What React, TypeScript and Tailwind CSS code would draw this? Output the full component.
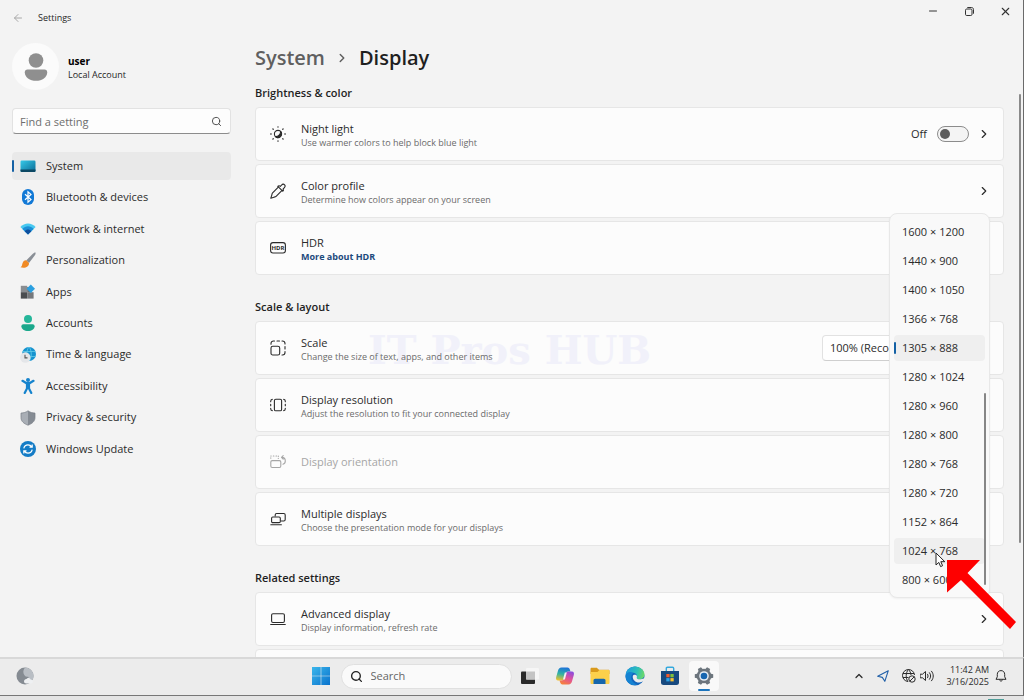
import { useState, type ReactNode } from 'react';
import { ArrowLeft, ChevronRight, ChevronUp, Minus, Search, X } from 'lucide-react';

const navItems = [
  { label: 'System', icon: <SystemIcon /> },
  { label: 'Bluetooth & devices', icon: <BluetoothIcon /> },
  { label: 'Network & internet', icon: <NetworkIcon /> },
  { label: 'Personalization', icon: <BrushIcon /> },
  { label: 'Apps', icon: <AppsIcon /> },
  { label: 'Accounts', icon: <AccountsIcon /> },
  { label: 'Time & language', icon: <TimeIcon /> },
  { label: 'Accessibility', icon: <AccessibilityIcon /> },
  { label: 'Privacy & security', icon: <ShieldIcon /> },
  { label: 'Windows Update', icon: <UpdateIcon /> },
];

const resolutions = [
  '1600 × 1200',
  '1440 × 900',
  '1400 × 1050',
  '1366 × 768',
  '1305 × 888',
  '1280 × 1024',
  '1280 × 960',
  '1280 × 800',
  '1280 × 768',
  '1280 × 720',
  '1152 × 864',
  '1024 × 768',
  '800 × 600',
];

/* ---------- sidebar icons ---------- */

function SystemIcon() {
  return (
    <svg className="w-4 h-4" viewBox="0 0 16 16">
      <defs>
        <linearGradient id="sys" x1="0" y1="0" x2="1" y2="1">
          <stop offset="0" stopColor="#35c9e8" />
          <stop offset="1" stopColor="#0a6a94" />
        </linearGradient>
      </defs>
      <rect x="0.5" y="2.5" width="15" height="11.5" rx="1.2" fill="url(#sys)" />
      <path d="M0.5 11.6h15v1.2a1.2 1.2 0 0 1-1.2 1.2H1.7a1.2 1.2 0 0 1-1.2-1.2z" fill="#0b4763" />
    </svg>
  );
}

function BluetoothIcon() {
  return (
    <svg className="w-4 h-4" viewBox="0 0 16 16">
      <rect x="2" y="0" width="12" height="16" rx="6" fill="#1279d6" />
      <path d="M5 5.2l6 5.4-3 2.6V2.8l3 2.6-6 5.4" fill="none" stroke="#fff" strokeWidth="1.2" />
    </svg>
  );
}

function NetworkIcon() {
  return (
    <svg className="w-4 h-4" viewBox="0 0 16 16">
      <path d="M0.4 6C4.4 1.2 11.6 1.2 15.6 6L8 13.5z" fill="#47c8f0" />
      <path d="M2.4 8C5.4 4.400 10.6 4.400 13.6 8L8 13.5z" fill="#1b8fd8" />
      <path d="M4.6 10.200c2-2.3 4.800-2.3 6.800 0L8 13.500z" fill="#0e4f9e" />
    </svg>
  );
}

function BrushIcon() {
  return (
    <svg className="w-4 h-4" viewBox="0 0 16 16">
      <path d="M15.5 0.5c.4.9-.2 2-.8 3L9 11 6.2 8.4 12.6 2c.9-.9 1.9-1.6 2.9-1.5z" fill="#8a8f96" />
      <path d="M6.2 8.3L9 11c.3 2-1.2 3.8-3.4 4.4-1.7.4-3.6.3-5.1-.2 1.6-.8 1.4-2.1 2-4C3.200 9.200 4.600 8 6.200 8.300z" fill="#f08a24" />
    </svg>
  );
}

function AppsIcon() {
  return (
    <svg className="w-4 h-4" viewBox="0 0 16 16">
      <rect x="0.8" y="1.8" width="6.4" height="6.4" fill="#8a8d91" />
      <rect x="0.8" y="8.2" width="6.4" height="6.4" fill="#4b4d50" />
      <rect x="7.2" y="8.2" width="6.4" height="6.4" fill="#75787c" />
      <rect x="7.2" y="3" width="3" height="5.2" fill="#6b6e72" />
      <path d="M10.8 0.5L15 4.7 10.8 8.9 6.6 4.7z" fill="#2a9fe0" />
    </svg>
  );
}

function AccountsIcon() {
  return (
    <svg className="w-4 h-4" viewBox="0 0 16 16">
      <circle cx="8" cy="4" r="4" fill="#25b69a" />
      <path d="M3.4 9.2h9.2c1.2 0 2 .8 2 2 0 3-3 4.8-6.6 4.8S1.4 14.2 1.4 11.2c0-1.2.8-2 2-2z" fill="#1ba88c" />
    </svg>
  );
}

function TimeIcon() {
  return (
    <svg className="w-4 h-4" viewBox="0 0 16 16">
      <circle cx="9" cy="7" r="7" fill="#1693cf" />
      <path d="M9 0c-3 3-3 11 0 14M9 0c3 3 3 11 0 14M2.5 4.5h13M2.5 9.5h13" fill="none" stroke="#63cbe9" strokeWidth="0.8" />
      <circle cx="5.3" cy="10.5" r="5.2" fill="#e4e6e9" />
      <path d="M5 7.7v3.2h2.5" fill="none" stroke="#555" strokeWidth="1.1" />
    </svg>
  );
}

function AccessibilityIcon() {
  return (
    <svg className="w-4 h-4" viewBox="0 0 16 16">
      <circle cx="8" cy="2" r="2" fill="#1583cd" />
      <path d="M2.5 2.8L6.5 5.2h3l4-2.4M8 5v5M7 6v4.500L4.700 15M9 6v4.500l2.300 4.500" fill="none" stroke="#1583cd" strokeWidth="2.2" strokeLinecap="round" strokeLinejoin="round" />
    </svg>
  );
}

function ShieldIcon() {
  return (
    <svg className="w-4 h-4" viewBox="0 0 16 16">
      <path d="M8 .8c2 1.5 4.400 2.200 7 2.300v4.500c0 3.700-2.800 6-7 7.600z" fill="#858b93" />
      <path d="M8 .8C6 2.300 3.600 3 1 3.100v4.500c0 3.700 2.800 6 7 7.600z" fill="#a9aeb5" />
      <path d="M8 .8c2 1.5 4.400 2.200 7 2.300v4.500c0 3.700-2.800 6-7 7.600-4.200-1.600-7-3.900-7-7.600V3.100C3.600 3 6 2.300 8 .8z" fill="none" stroke="#777d85" strokeWidth="0.7" />
    </svg>
  );
}

function UpdateIcon() {
  return (
    <svg className="w-4 h-4" viewBox="0 0 16 16">
      <circle cx="8" cy="8" r="8" fill="#147cc6" />
      <path d="M3.8 7.3C4.3 5 6 3.900 8 3.900c1.600 0 2.900.7 3.800 2M12.200 3.500v2.700H9.500M12.200 8.700c-.5 2.300-2.200 3.400-4.200 3.400-1.600 0-2.900-.7-3.800-2M3.800 12.500V9.800h2.700" fill="none" stroke="#fff" strokeWidth="1.2" />
    </svg>
  );
}

/* ---------- card icons ---------- */

function LineIcon({ children }: { children: ReactNode }) {
  return (
    <svg className="w-4 h-4 shrink-0" viewBox="0 0 16 16" fill="none" stroke="currentColor" strokeWidth="1.1" strokeLinecap="round" strokeLinejoin="round">
      {children}
    </svg>
  );
}

const nightLightIcon = (
  <LineIcon>
    <circle cx="8" cy="8" r="3.6" />
    <path d="M10.6 5.4a3.7 3.7 0 0 1-5.2 5.2c2.8.2 5.4-2.4 5.2-5.2z" fill="currentColor" />
    <path d="M8 .8v.3M8 14.900v.3M.8 8h.3M14.900 8h.3M2.900 2.900l.3.3M12.800 12.800l.3.3M2.900 13.100l.3-.3M12.800 3.200l.3-.3" strokeWidth="1.3" />
  </LineIcon>
);

const colorProfileIcon = (
  <LineIcon>
    <path d="M8.300 4.200L2.600 9.900c-.5.500-.6 1.200-.8 2.200L.8 15.200l3.100-1c1-.2 1.700-.3 2.200-.8l5.700-5.700" />
    <path d="M7.800 3.300l4.900 4.900c1-.6.900-1.500.3-2.100l1.200-1.200c1.200-1.200 1.200-2.200.4-3.100-.9-.9-2-.9-3.100.3L10.300 3.300c-.7-.7-1.800-.8-2.500 0z" />
  </LineIcon>
);

const hdrIcon = (
  <svg className="w-4 h-4 shrink-0" viewBox="0 0 16 16" fill="none" stroke="currentColor">
    <rect x="0.6" y="2.6" width="14.8" height="10.4" rx="2.4" strokeWidth="1.1" />
    <text x="8" y="10.1" textAnchor="middle" fill="currentColor" stroke="none" fontSize="6" fontWeight="700">HDR</text>
  </svg>
);

const scaleIcon = (
  <LineIcon>
    <rect x="1" y="6.3" width="8.7" height="8.7" rx="1.8" />
    <path d="M1 4.200V3.500A2.500 2.500 0 0 1 3.500 1h1M7 1h2.500M12 1h.5A2.500 2.500 0 0 1 15 3.500V4M15 6.500V9M15 11.500v1a2.500 2.500 0 0 1-2.500 2.500H12" />
  </LineIcon>
);

const resolutionIcon = (
  <LineIcon>
    <rect x="4.400" y="2.200" width="7.200" height="11.600" rx="1.4" />
    <path d="M2.300 2.400C1.300 2.500.7 3.200.7 4.200v.6M.7 7.200v1.600M2.300 13.600c-1-.1-1.600-.8-1.600-1.800v-.6M13.700 2.400c1 .1 1.600.8 1.600 1.800v.6M15.300 7.200v1.600M13.700 13.600c1-.1 1.600-.8 1.600-1.800v-.6" />
  </LineIcon>
);

const orientationIcon = (
  <LineIcon>
    <rect x="0.8" y="6.6" width="10" height="6.900" rx="1.4" />
    <path d="M.8 4.300v-.4M.8 2h.4M3.300 2h.6M6 2h.6M8.300 2v.4M8.300 4.200v.2M13.200 1.700l-1.700 1.700 1.700 1.700M11.700 3.400c2.400 0 3.600 1.500 3.600 3.500 0 1.700-.9 2.900-2.400 3.300" />
  </LineIcon>
);

const multipleIcon = (
  <LineIcon>
    <path d="M5.2 5V3.900c0-.8.6-1.400 1.400-1.400h7.200c.8 0 1.400.6 1.400 1.400v4.700c0 .8-.6 1.400-1.400 1.400h-2.600" />
    <rect x="1.6" y="6" width="8.7" height="5.600" rx="1.2" />
    <path d="M.8 13.700h10.600" />
  </LineIcon>
);

const laptopIcon = (
  <LineIcon>
    <rect x="1.6" y="2.7" width="12.8" height="8.8" rx="1.4" />
    <path d="M.7 13.5h14.6" />
  </LineIcon>
);

/* ---------- taskbar icons ---------- */

function StartIcon() {
  return (
    <svg className="w-5 h-5" viewBox="0 0 20 20">
      <defs>
        <linearGradient id="start" x1="0" y1="0" x2="1" y2="1">
          <stop offset="0" stopColor="#3bb7ec" />
          <stop offset="1" stopColor="#0a72cc" />
        </linearGradient>
      </defs>
      <path d="M1 1h8.700v8.700H1zM10.300 1H19v8.700h-8.700zM1 10.300h8.700V19H1zM10.300 10.300H19V19h-8.700z" fill="url(#start)" />
    </svg>
  );
}

function TaskViewIcon() {
  return (
    <svg className="w-5 h-5" viewBox="0 0 20 20">
      <rect x="1" y="5.5" width="14" height="12.5" rx="1" fill="#2a2a2a" />
      <rect x="6" y="2" width="13" height="11.5" rx="1" fill="#f6f6f6" />
      <rect x="6" y="5.5" width="9" height="8" fill="#c4c4c4" />
    </svg>
  );
}

function CopilotIcon() {
  return (
    <svg className="w-5 h-5" viewBox="0 0 20 20">
      <defs>
        <linearGradient id="cpa" x1="0.5" y1="0" x2="0.3" y2="1">
          <stop offset="0" stopColor="#1d72d8" />
          <stop offset="0.5" stopColor="#2fb3a5" />
          <stop offset="1" stopColor="#f0c22c" />
        </linearGradient>
        <linearGradient id="cpb" x1="0.8" y1="0" x2="0.3" y2="1">
          <stop offset="0" stopColor="#8a4be0" />
          <stop offset="0.5" stopColor="#e0529a" />
          <stop offset="1" stopColor="#f7813a" />
        </linearGradient>
      </defs>
      <path d="M6.5 1.5h6c1.400 0 2 1 2.400 2.200l.6 1.800h-2.200c-1.400 0-2.100.8-2.500 2.200l-1.400 4.600c-.4 1.400-1.200 2.200-2.600 2.200H3.200C1.200 14.500.7 12.800 1.200 11l1.700-6c.6-2.200 1.600-3.500 3.600-3.500z" fill="url(#cpa)" />
      <path d="M13.500 18.500h-6c-1.400 0-2-1-2.400-2.200l-.6-1.800h2.200c1.400 0 2.100-.8 2.500-2.200l1.400-4.600c.4-1.400 1.200-2.200 2.600-2.200h3.600c2 0 2.500 1.700 2 3.500l-1.700 6c-.6 2.200-1.600 3.500-3.600 3.500z" fill="url(#cpb)" />
      <path d="M9.800 6.500h2l-1.900 7H8z" fill="#f4f1f3" />
    </svg>
  );
}

function ExplorerIcon() {
  return (
    <svg className="w-5 h-5" viewBox="0 0 20 20">
      <path d="M.5 3c0-.8.5-1.300 1.300-1.300h5L9 3.800h9.200c.8 0 1.300.5 1.300 1.300V8H.5z" fill="#d99a1c" />
      <path d="M.5 6h7l2-2h8.700c.8 0 1.300.5 1.300 1.300v11.400c0 .8-.5 1.300-1.300 1.300H1.800C1 18 .5 17.500.5 16.700z" fill="#fcd04b" />
      <path d="M3.5 18v-3.500c0-1 .7-1.700 1.700-1.700h8.600c1 0 1.700.7 1.700 1.700V18z" fill="#1667ad" />
    </svg>
  );
}

function EdgeIcon() {
  return (
    <svg className="w-5 h-5" viewBox="0 0 20 20">
      <defs>
        <linearGradient id="edge" x1="0" y1="0.3" x2="1" y2="0.5">
          <stop offset="0" stopColor="#1e9be0" />
          <stop offset="0.6" stopColor="#2dc0b8" />
          <stop offset="1" stopColor="#6bd968" />
        </linearGradient>
      </defs>
      <circle cx="10" cy="10" r="9.5" fill="#1265bd" />
      <path d="M.6 9C1 4 5 .5 10 .5c5.500 0 9.500 4 9.500 8 0 3-2.200 4.800-5 4.800-2 0-3.200-.7-2.700-1.600.8-1.500.2-4.500-3.600-5C4.600 6.400 1.500 7 .6 9z" fill="url(#edge)" />
      <path d="M7.800 10c-.6 3.800 3 6.800 6.600 6.500 1.600-.1 2.600-.7 3.600-1.200l2 1V12l-3 1c-2.500.8-5.400.2-5.200-1.200.6-1.600-.3-3-1.400-3-1.300-.1-2.400.2-2.600 1.200z" fill="#ececec" />
      <path d="M6.800 9c-2 4 1.200 9 5.700 9.300C7 21 .5 16.500.5 10c.5-4 5-4.800 7.800-3-.7.4-1.100 1-1.500 2z" fill="#1583d2" />
    </svg>
  );
}

function StoreIcon() {
  return (
    <svg className="w-5 h-5" viewBox="0 0 20 20">
      <path d="M6.300 5V2.500c0-.8.4-1.200 1.200-1.200h5c.8 0 1.200.4 1.200 1.200V5" fill="none" stroke="#35a9dd" strokeWidth="1.4" />
      <path d="M1 5h18v11.500c0 1.700-1 2.500-2.500 2.500h-13C2 19 1 18.200 1 16.500z" fill="#17497f" />
      <path d="M6.300 8h3.300v3.300H6.300z" fill="#f05a2b" />
      <path d="M10.400 8h3.300v3.300h-3.300z" fill="#7fc13b" />
      <path d="M6.300 12.100h3.300v3.300H6.300z" fill="#2ba3e8" />
      <path d="M10.400 12.100h3.300v3.300h-3.300z" fill="#fbc02d" />
    </svg>
  );
}

function GearIcon() {
  return (
    <svg className="w-5 h-5" viewBox="0 0 20 20">
      <g fill="#6c757d">
        <circle cx="10" cy="10" r="7.3" />
        <path d="M8.200.8h3.600l.7 3.200h-5zM8.200 19.200h3.600l.7-3.200h-5z" transform="rotate(30 10 10)" />
        <path d="M8.200.8h3.600l.7 3.200h-5zM8.200 19.200h3.600l.7-3.200h-5z" transform="rotate(90 10 10)" />
        <path d="M8.200.8h3.600l.7 3.200h-5zM8.200 19.200h3.600l.7-3.200h-5z" transform="rotate(150 10 10)" />
      </g>
      <circle cx="10" cy="10" r="4.800" fill="#e6eef5" />
      <circle cx="10" cy="10" r="3.300" fill="#1766b0" />
    </svg>
  );
}

/* ---------- building blocks ---------- */

function Card({ icon, title, text, link, disabled, children }: {
  icon?: ReactNode;
  title?: string;
  text?: string;
  link?: string;
  disabled?: boolean;
  children?: ReactNode;
}) {
  return (
    <div className={`relative flex items-center h-[54px] pl-[14px] pr-3 rounded border border-[#e6e6e6] bg-[#fcfcfc] ${disabled ? 'text-[#a6a6a6]' : 'text-[#2b2b2b]'}`}>
      {icon}
      <div className={`relative z-[1] ml-[15px] flex-1 min-w-0 ${text || link ? 'pt-[3px]' : ''}`}>
        {title && <h3 className="text-[11px] leading-[14px]">{title}</h3>}
        {text && <p className="text-[9px] leading-[14px] text-[#6b6b6b]">{text}</p>}
        {link && (
          <a href="#hdr" className="block text-[9px] leading-[14px] font-bold text-[#1c4a7c]">{link}</a>
        )}
      </div>
      {children}
    </div>
  );
}

function Section({ title, children }: { title: string; children: ReactNode }) {
  return (
    <section className="mb-[22px]">
      <h2 className="h-5 mb-1 text-[11px] leading-[20px] font-semibold text-[#1f1f1f]">{title}</h2>
      <div className="flex flex-col gap-[3px]">{children}</div>
    </section>
  );
}

function ResolutionMenu({ value, onSelect }: { value: string; onSelect: (value: string) => void }) {
  return (
    <div className="absolute z-10 -top-[166px] right-[13px] w-[101px] h-[385px] pt-[5px] px-1 rounded-lg border border-[#e8e8e8] bg-[#f9f9f9] shadow-xs">
      <ul role="listbox" aria-label="Display resolution" className="flex flex-col gap-[3px]">
        {resolutions.map((item) => (
          <li key={item} role="option" aria-selected={item === value}>
            <button
              type="button"
              onClick={() => onSelect(item)}
              className={`relative flex items-center w-full h-[26px] pl-2 rounded text-[11px] text-[#2b2b2b] whitespace-nowrap ${item === value || item === '1024 × 768' ? 'bg-[#efefef]' : ''}`}
            >
              {item === value && <span className="absolute left-0 top-[7px] w-[2px] h-3 rounded-full bg-[#1461a5]" />}
              {item}
            </button>
          </li>
        ))}
      </ul>
      <span className="absolute right-[3px] top-[179px] w-[2px] h-[192px] rounded-full bg-[#868686]" />

      {/* pointer and callout arrow */}
      <svg className="absolute left-[45px] top-[338px] w-[11px] h-[16px]" viewBox="0 0 11 16">
        <path d="M1 1v12l2.800-2.600L5.600 14.600l2-.9-1.800-4H9.800z" fill="#fff" stroke="#222" strokeWidth="1" />
      </svg>
      <svg className="absolute left-[57px] top-[346px] w-[70px] h-[70px]" viewBox="0 0 70 70">
        <path d="M0 0h33L20.500 13 69 62l-6 7L14 20 0 32.500z" fill="#fe0000" />
      </svg>
    </div>
  );
}

export default function App() {
  const [active, setActive] = useState('System');
  const [nightLight, setNightLight] = useState(false);
  const [resolution, setResolution] = useState('1305 × 888');

  return (
    <div className="flex flex-col h-screen overflow-hidden bg-[#e4e4e4] font-['Open_Sans','Noto_Sans',sans-serif] text-[#1f1f1f]">
      <div className="relative flex flex-col flex-1 min-h-0 border-r border-[#6a6a6a] bg-[#f3f3f3]">
        <header className="flex justify-between h-9 shrink-0">
          <div className="flex items-center gap-[14px] pl-3">
            <button type="button" aria-label="Back" className="text-[#a8a8a8]">
              <ArrowLeft size={12} strokeWidth={2} />
            </button>
            <span className="text-[9px]">Settings</span>
          </div>
          <div className="flex h-[22px] text-[#333]">
            <button type="button" aria-label="Minimize" className="flex items-center justify-center w-9">
              <Minus size={12} strokeWidth={2} />
            </button>
            <button type="button" aria-label="Restore" className="flex items-center justify-center w-9">
              <svg className="w-[9px] h-[9px]" viewBox="0 0 9 9" fill="none" stroke="currentColor">
                <rect x="0.5" y="2" width="6.5" height="6.5" rx="1.2" />
                <path d="M2.300.5h4.200c1.200 0 2 .8 2 2v4.200" />
              </svg>
            </button>
            <button type="button" aria-label="Close" className="flex items-center justify-center w-9">
              <X size={13} strokeWidth={2} />
            </button>
          </div>
        </header>

        <div className="flex flex-1 min-h-0">
          <aside className="w-[243px] shrink-0 pl-3 pr-3 pt-[7px]">
            <div className="flex items-center gap-[9px]">
              <div className="flex items-center justify-center w-[47px] h-[47px] rounded-full bg-[#fbfbfb]">
                <svg className="w-6 h-7" viewBox="0 0 24 28" fill="#8f8f8f">
                  <circle cx="12" cy="7.5" r="7.3" />
                  <path d="M3.5 16.500h17c1.700 0 2.700 1 2.700 2.700 0 5.300-5 8.600-11.200 8.600S.8 24.500.8 19.200c0-1.700 1-2.700 2.700-2.700z" />
                </svg>
              </div>
              <div className="pt-[3px] leading-[14px]">
                <p className="text-[10px] font-bold text-black">user</p>
                <p className="text-[9px]">Local Account</p>
              </div>
            </div>

            <label className="flex items-center h-[26px] mt-[18px] rounded border border-[#e2e2e2] border-b-[#8c8c8c] bg-[#fdfdfd]">
              <input
                type="text"
                aria-label="Find a setting"
                placeholder="Find a setting"
                className="w-full h-full pl-[7px] text-[11px] bg-transparent outline-none placeholder:text-[#6e6e6e]"
              />
              <Search size={11} strokeWidth={2} className="mr-2 shrink-0 text-[#444]" />
            </label>

            <nav className="flex flex-col justify-between h-[311px] mt-[18px]">
              {navItems.map(({ label, icon }) => (
                <button
                  key={label}
                  type="button"
                  onClick={() => setActive(label)}
                  className={`relative flex items-center gap-[10px] h-7 pl-2 rounded text-[11px] text-[#2b2b2b] ${active === label ? 'bg-[#e9e9e9]' : ''}`}
                >
                  {active === label && <span className="absolute left-0 w-[2px] h-3 rounded-full bg-[#1461a5]" />}
                  {icon}
                  {label}
                </button>
              ))}
            </nav>
          </aside>

          <main className="relative flex-1 min-w-0 overflow-hidden pl-3 pr-[19px]">
            <h1 className="flex items-center gap-[10px] h-11 text-[20px] font-semibold">
              <a href="#system" className="text-[#5f5f5f]">System</a>
              <ChevronRight size={14} strokeWidth={2.5} className="text-[#5f5f5f]" />
              <span>Display</span>
            </h1>

            <div className="pt-[3px]">
              <Section title="Brightness & color">
                <Card icon={nightLightIcon} title="Night light" text="Use warmer colors to help block blue light">
                  <label className="flex items-center gap-[10px] text-[11px]">
                    {nightLight ? 'On' : 'Off'}
                    <input
                      type="checkbox"
                      role="switch"
                      checked={nightLight}
                      onChange={(e) => setNightLight(e.target.checked)}
                      className="relative appearance-none w-8 h-4 rounded-full border border-[#8c8c8c] bg-[#f4f4f4] before:absolute before:left-[2px] before:top-[2px] before:w-[10px] before:h-[10px] before:rounded-full before:bg-[#5c5c5c] checked:before:left-[18px]"
                    />
                  </label>
                  <ChevronRight size={14} strokeWidth={2} className="ml-2" />
                </Card>
                <Card icon={colorProfileIcon} title="Color profile" text="Determine how colors appear on your screen">
                  <ChevronRight size={14} strokeWidth={2} />
                </Card>
                <Card icon={hdrIcon} title="HDR" link="More about HDR" />
              </Section>

              <Section title="Scale & layout">
                <Card icon={scaleIcon} title="Scale" text="Change the size of text, apps, and other items">
                  <span className="absolute left-[112px] top-[8px] text-[40px] leading-[40px] font-bold font-['DejaVu_Serif',serif] text-[#f1f1fa] whitespace-nowrap select-none">
                    IT Pros HUB
                  </span>
                  <select aria-label="Scale" className="relative appearance-none w-[148px] h-[26px] mr-[21px] pl-[7px] rounded border border-[#e2e2e2] border-b-[#cfcfcf] bg-white text-[11px]">
                    <option>100% (Recommended)</option>
                  </select>
                </Card>
                <Card icon={resolutionIcon} title="Display resolution" text="Adjust the resolution to fit your connected display">
                  <ResolutionMenu value={resolution} onSelect={setResolution} />
                </Card>
                <Card icon={orientationIcon} title="Display orientation" disabled />
                <Card icon={multipleIcon} title="Multiple displays" text="Choose the presentation mode for your displays" />
              </Section>

              <Section title="Related settings">
                <Card icon={laptopIcon} title="Advanced display" text="Display information, refresh rate">
                  <ChevronRight size={14} strokeWidth={2} />
                </Card>
                <Card />
              </Section>
            </div>
          </main>
        </div>
        <span className="absolute right-[2px] top-[94px] w-[2px] h-[449px] rounded-full bg-[#8a8a8a]" />
      </div>

      <footer className="grid grid-cols-[1fr_auto_1fr] items-center h-[39px] pb-[2px] shrink-0 border-t-2 border-b border-r border-t-[#d8d8d8] border-b-[#777] border-r-[#6a6a6a] bg-[#ececec]">
        <button type="button" aria-label="Weather" className="justify-self-start ml-4">
          <svg className="w-[18px] h-[18px]" viewBox="0 0 18 18">
            <circle cx="9" cy="9" r="8.5" fill="#858b92" />
            <path d="M9 .5a8.500 8.500 0 0 1 8 11.500c-2 1-4.600-.4-4.800-2.300C8 10.500 5.500 5 9 .5z" fill="#b9bec4" />
            <path d="M8 14.500c0-1.700 1.200-2.700 2.600-2.600.6-1.300 3.200-1.400 3.900.3 1.500-.2 2.500.8 2.500 2 0 1.300-1 2.300-2.300 2.300h-4.500C9 16.500 8 15.700 8 14.500z" fill="#eef0f2" />
          </svg>
        </button>

        <div className="flex items-center pl-[6px]">
          <button type="button" aria-label="Start"><StartIcon /></button>
          <label className="flex items-center w-[171px] h-[25px] ml-[10px] mr-2 pl-2 gap-2 shrink-0 rounded-full border border-[#e0e0e0] bg-[#fafafa]">
            <Search size={13} strokeWidth={2.5} className="shrink-0 text-[#222]" />
            <input type="text" aria-label="Search" placeholder="Search" className="w-full min-w-0 mr-3 text-[11px] bg-transparent outline-none placeholder:text-[#666]" />
          </label>
          <div className="flex items-center gap-[15px]">
            <button type="button" aria-label="Task view"><TaskViewIcon /></button>
            <button type="button" aria-label="Copilot"><CopilotIcon /></button>
            <button type="button" aria-label="File Explorer"><ExplorerIcon /></button>
            <button type="button" aria-label="Edge"><EdgeIcon /></button>
            <button type="button" aria-label="Store"><StoreIcon /></button>
          </div>
          <button type="button" aria-label="Settings" className="relative flex items-center justify-center w-[30px] h-[30px] ml-[9px] rounded bg-[#f9f9f9]">
            <GearIcon />
            <span className="absolute bottom-0 w-3 h-[2px] rounded-full bg-[#1b74bd]" />
          </button>
        </div>

        <div className="flex items-center justify-self-end mr-4 text-[#2b2b2b]">
          <button type="button" aria-label="Hidden icons"><ChevronUp size={12} strokeWidth={2.5} /></button>
          <svg className="w-3 h-3 ml-3" viewBox="0 0 12 12" fill="none" stroke="#1f5fa8" strokeWidth="1.1" strokeLinejoin="round">
            <path d="M11.300.7L.7 6.200l4.600 1.200 2.500 3.900z" />
          </svg>
          <svg className="w-[14px] h-[14px] ml-[13px]" viewBox="0 0 14 14" fill="none" stroke="currentColor">
            <path d="M12.500 6A6 6 0 1 0 6 12.500M6.500.5C3.500 3.500 3.500 9.500 6 12.500M6.500.5C8 2 8.800 4 9 6M1 4.500h11M1 8.500h5.500" />
            <circle cx="10" cy="10" r="3.2" />
            <path d="M7.800 12.200l4.400-4.400" />
          </svg>
          <svg className="w-[14px] h-3 ml-1" viewBox="0 0 14 12" fill="none" stroke="currentColor" strokeLinejoin="round" strokeLinecap="round">
            <path d="M.5 4.200h2L5.500 1.500v9L2.500 7.800h-2zM7.500 4.200c.8 1 .8 2.600 0 3.600M9.500 2.700c1.600 1.900 1.600 4.700 0 6.600M11.500 1.200c2.400 2.800 2.400 6.800 0 9.600" />
          </svg>
          <div className="ml-3 text-right text-[9px] leading-[12px]">
            <p>11:42 AM</p>
            <p>3/16/2025</p>
          </div>
          <button type="button" aria-label="Notifications" className="ml-[6px]">
            <svg className="w-3 h-3" viewBox="0 0 12 12" fill="none" stroke="currentColor" strokeLinejoin="round">
              <path d="M6 .6C3.800.6 2.300 2.200 2.300 4.300v2.500L1 9.300h10L9.700 6.800V4.300C9.700 2.200 8.200.6 6 .6zM4.500 9.500c.2 1 .8 1.600 1.500 1.600s1.300-.6 1.500-1.600" />
            </svg>
          </button>
        </div>
      </footer>
      <div className="flex items-end justify-end h-1 pr-5 shrink-0">
        <span className="w-4 h-px bg-[#4f9d98]" />
      </div>
    </div>
  );
}
